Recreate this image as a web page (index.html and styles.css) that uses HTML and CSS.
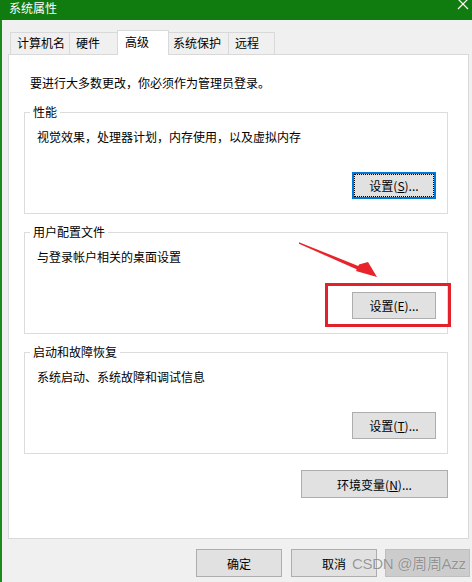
FILE: index.html
```html
<!DOCTYPE html>
<html lang="zh-CN">
<head>
<meta charset="utf-8">
<title>系统属性</title>
<link rel="stylesheet" href="styles.css">
</head>
<body>
<div class="window">
  <div class="titlebar">
    <span class="title">系统属性</span>
    <svg class="close" width="12" height="12" viewBox="0 0 12 12"><path d="M1 -1 L11 9 M11 -1 L1 9" stroke="#fff" stroke-width="1.2" fill="none"/></svg>
  </div>
  <div class="body">
    <div class="tabs">
      <div class="tab t1">计算机名</div>
      <div class="tab t2">硬件</div>
      <div class="tab t3 active">高级</div>
      <div class="tab t4">系统保护</div>
      <div class="tab t5">远程</div>
    </div>
    <div class="panel">
      <p class="intro">要进行大多数更改，你必须作为管理员登录。</p>
      <fieldset class="group">
        <legend>性能</legend>
        <p class="desc">视觉效果，处理器计划，内存使用，以及虚拟内存</p>
        <div class="row"><button class="btn focus">设置(<u>S</u>)...</button></div>
      </fieldset>
      <fieldset class="group next">
        <legend>用户配置文件</legend>
        <p class="desc">与登录帐户相关的桌面设置</p>
        <div class="row"><button class="btn">设置(E)...</button></div>
      </fieldset>
      <fieldset class="group next">
        <legend>启动和故障恢复</legend>
        <p class="desc">系统启动、系统故障和调试信息</p>
        <div class="row"><button class="btn">设置(<u>T</u>)...</button></div>
      </fieldset>
      <div class="row env"><button class="btn wide">环境变量(<u>N</u>)...</button></div>
    </div>
    <div class="footer">
      <button class="btn foot">确定</button>
      <button class="btn foot">取消</button>
      <button class="btn foot apply" disabled></button>
    </div>
  </div>
  <div class="highlight"></div>
  <svg class="arrow" width="472" height="582" viewBox="0 0 472 582">
    <polygon points="299,242.2 362,267.5 360.5,271 299,243.8" fill="#e8232b"/>
    <polygon points="377,277 356,271 359,264.5 368,262" fill="#e8232b"/>
  </svg>
  <div class="wm w2">MSXF\houku</div>
  <div class="wm w3">2023-09-2</div>
  <div class="csdn">CSDN @周周Azz</div>
</div>
</body>
</html>
```
FILE: styles.css
```css
* { box-sizing: border-box; }
html, body { margin: 0; padding: 0; }
body {
  width: 472px;
  height: 582px;
  overflow: hidden;
  background: #f0f0f0;
  font-family: "Noto Sans CJK SC", "Microsoft YaHei", sans-serif;
  font-size: 12px;
  color: #000;
}
.window {
  position: relative;
  width: 472px;
  height: 582px;
  background: #f0f0f0;
  border-left: 2px solid #1a8a1a;
}
.titlebar {
  height: 20px;
  margin-left: -2px;
  background: #107c10;
  color: #fff;
  display: flex;
  align-items: flex-start;
  justify-content: space-between;
  padding: 0 3px 0 9px;
}
.title { line-height: 15px; font-size: 12px; }
.close { display: block; margin-top: 0; }
.body { padding-top: 10px; }
.tabs {
  display: flex;
  align-items: flex-end;
  height: 24px;
  padding-left: 8px;
  position: relative;
  z-index: 2;
}
.tab {
  height: 22px;
  border: 1px solid #d9d9d9;
  border-bottom: none;
  background: #f0f0f0;
  line-height: 20px;
  padding-left: 5px;
  margin-left: -1px;
  white-space: nowrap;
}
.t1 { width: 60px; margin-left: 0; padding-left: 6px; }
.t2 { width: 49px; padding-left: 6px; }
.t3 { width: 52px; }
.t4 { width: 61px; padding-left: 4px; }
.t5 { width: 47px; padding-left: 6px; }
.tab.active {
  height: 25px;
  margin-bottom: -1px;
  background: #fff;
  padding-left: 7px;
  line-height: 21px;
}
.panel {
  position: relative;
  z-index: 1;
  margin-left: 6px;
  width: 461px;
  height: 485px;
  background: #fff;
  border: 1px solid #d9d9d9;
  padding: 20px 0 0 15px;
}
.intro {
  margin: 0 0 0 6px;
  line-height: 16px;
}
.group {
  margin: 13px 0 0 0;
  width: 424px;
  border: 1px solid #dcdcdc;
  padding: 0 11px 14px 12px;
  min-width: 0;
}
.group.next { margin-top: 10px; }
.group legend {
  margin-left: -7px;
  padding: 0 3px;
  line-height: 16px;
}
.desc {
  margin: 9px 0 0 0;
  line-height: 16px;
}
.row {
  display: flex;
  justify-content: flex-end;
  margin-top: 27px;
}
.btn {
  width: 84px;
  height: 27px;
  background: #e1e1e1;
  border: 1px solid #adadad;
  font-family: inherit;
  font-size: 12px;
  color: #000;
  padding: 0;
  border-radius: 0;
}
.btn.focus {
  border: 2px solid #0078d7;
  outline: 1px dotted #000;
  outline-offset: -3px;
}
.env { width: 424px; margin-top: 16px; }
.btn.wide { width: 147px; height: 28px; }
.footer {
  display: flex;
  justify-content: flex-end;
  gap: 9px;
  margin-top: 10px;
  padding-right: 2px;
}
.btn.foot { width: 86px; height: 28px; }
.btn.apply {
  width: 85px;
  margin-left: -1px;
  background: #cccccc;
  border-color: #bfbfbf;
}
.highlight {
  position: absolute;
  left: 323px;
  top: 283px;
  width: 126px;
  height: 44px;
  border: 3px solid #e3212b;
  z-index: 3;
}
.arrow {
  position: absolute;
  left: -2px;
  top: 0;
  z-index: 3;
}
.wm {
  position: absolute;
  z-index: 4;
  font-family: "Liberation Sans", sans-serif;
  font-size: 16px;
  letter-spacing: 3px;
  color: rgba(0, 0, 0, 0.025);
  transform: rotate(-40deg);
  transform-origin: left bottom;
  white-space: nowrap;
}
.w2 { left: 372px; top: 252px; }
.w3 { left: 256px; top: 318px; }
.csdn {
  position: absolute;
  z-index: 4;
  left: 350px;
  top: 555px;
  font-family: "Liberation Sans", sans-serif;
  font-size: 15px;
  letter-spacing: -0.3px;
  line-height: 18px;
  color: rgba(120, 120, 120, 0.75);
  text-shadow: 0 0 1px rgba(255, 255, 255, 0.6);
  white-space: nowrap;
}
```
